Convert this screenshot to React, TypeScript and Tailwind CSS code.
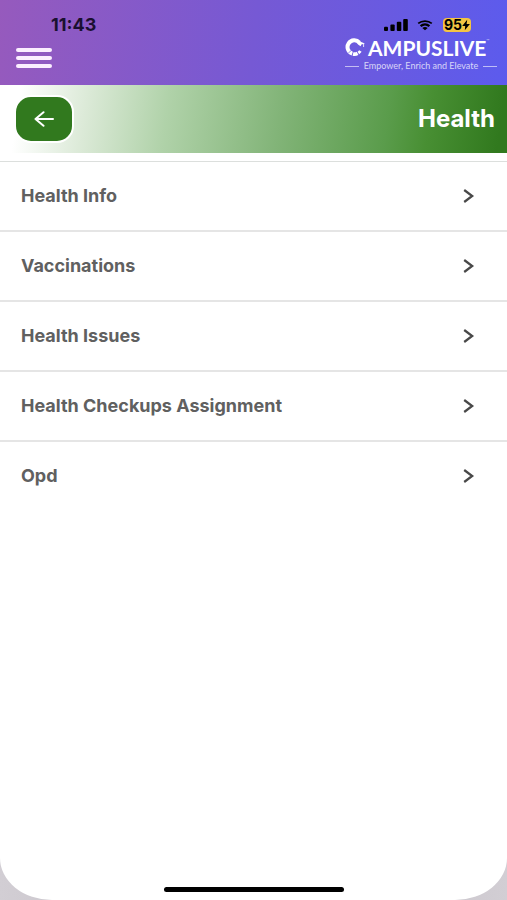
import { useState } from "react";

const items = [
  "Health Info",
  "Vaccinations",
  "Health Issues",
  "Health Checkups Assignment",
  "Opd",
];

function StatusBar() {
  return (
    <div className="flex items-center justify-between pl-[51px] pr-9 pt-[15px] text-black">
      <span className="text-[18px] leading-5 font-bold text-[#1a1030]">11:43</span>
      <div className="flex items-center">
        <svg className="h-3 w-6" viewBox="0 0 24 12" fill="currentColor" aria-label="Signal">
          <rect x="0" y="7.8" width="4" height="4.2" rx="1" />
          <rect x="6.4" y="5.5" width="4.3" height="6.5" rx="1" />
          <rect x="12.8" y="2.8" width="4.5" height="9.2" rx="1" />
          <rect x="19.2" y="0" width="4.6" height="12" rx="1" />
        </svg>
        <svg className="ml-2 h-3 w-[18px]" viewBox="0 0 18 12" aria-label="Wi-Fi">
          <path d="M2.2 4.4C6 1.3 12 1.3 15.8 4.4" fill="none" stroke="currentColor" strokeWidth="1.8" />
          <path d="M4.6 7.1C7.2 4.9 10.8 4.9 13.4 7.1" fill="none" stroke="currentColor" strokeWidth="2.3" />
          <path d="M6.3 9C8 7.8 10 7.8 11.7 9L9 11.3z" fill="currentColor" />
        </svg>
        <div className="ml-[9px] flex h-[14px] w-7 items-center justify-center rounded bg-[#f4c443]">
          <span className="text-[14px] leading-[14px] font-bold">95</span>
          <svg className="h-3 w-2" viewBox="0 0 8 12" fill="currentColor" aria-label="Charging">
            <path d="M5.2 .8L.2 6.9H3.2L2.8 11.2L7.9 5H4.6z" />
          </svg>
        </div>
      </div>
    </div>
  );
}

function Logo() {
  return (
    <div className="w-[158px] text-white">
      <div className="flex h-[19px] items-center">
        <svg className="mr-[2px] h-[19px] w-[21px] shrink-0" viewBox="0 0 21 19" aria-hidden="true">
          <path d="M14.4 4.6A6.8 6.8 0 1 0 7.2 15.6" fill="none" stroke="white" strokeWidth="4" />
          <path d="M8 15.9A6.8 6.8 0 0 0 12.6 15.4" fill="none" stroke="white" strokeWidth="3.6" />
          <path d="M13.4 14.9A6.8 6.8 0 0 0 15.4 13" fill="none" stroke="white" strokeWidth="3" />
          <path d="M11 2L20 5.6L16.4 6.6L15.6 8.2L13 6.4z" fill="white" />
          <path d="M18.6 6V9" stroke="white" strokeWidth=".8" />
          <path d="M3.2 15.2L6.6 12.2" stroke="#6259e5" strokeWidth=".7" />
        </svg>
        <span className="font-['Lato'] text-[21px] leading-[19px] font-bold">AMPUSLIVE</span>
        <span className="self-start text-[5px] leading-[6px] text-white/70">™</span>
      </div>
      <div className="mt-1 flex items-center gap-[5px] pr-[6px] text-white/75">
        <span className="h-px flex-1 bg-white/60" />
        <span className="font-['Lato'] text-[9px] leading-[10px]">Empower, Enrich and Elevate</span>
        <span className="h-px flex-1 bg-white/60" />
      </div>
    </div>
  );
}

export default function App() {
  const [menuOpen, setMenuOpen] = useState(false);

  return (
    <div className="min-h-screen bg-linear-to-r from-[#d2ced4] via-[#bdb8bf] to-[#d2ced4] font-['Inter',sans-serif]">
      <div className="flex min-h-screen flex-col overflow-hidden rounded-b-[52px_42px] bg-white">
        <header className="h-[85px] bg-[linear-gradient(96deg,#965abd,#7659d4_50%,#5c5bed)]">
          <StatusBar />
          <div className="flex items-start justify-between pl-4 pr-1">
            <button
              type="button"
              aria-label="Menu"
              aria-expanded={menuOpen}
              onClick={() => setMenuOpen(!menuOpen)}
              className="mt-[13px] flex w-9 flex-col gap-1"
            >
              <span className="h-1 w-full rounded-xs bg-[#fbeeff]" />
              <span className="h-1 w-full rounded-xs bg-[#fbeeff]" />
              <span className="h-1 w-full rounded-xs bg-[#fbeeff]" />
            </button>
            <div className="mt-[3px]">
              <Logo />
            </div>
          </div>
        </header>

        <div className="flex h-[68px] items-center justify-between bg-[linear-gradient(98deg,#fff_4%,#dcead8_17%,#b0d2a9_33%,#82b478_55%,#5a9c4b_76%,#488f33_84%,#31791e_98%)] pl-[14px] pr-3">
          <button
            type="button"
            aria-label="Back"
            className="flex h-12 w-[60px] items-center justify-center rounded-[17px] border-2 border-white bg-[#31791e]"
          >
            <svg className="h-4 w-5" viewBox="0 0 20 16" fill="none" stroke="white" strokeWidth="2" strokeLinecap="round" strokeLinejoin="round">
              <path d="M19 8H1.5M9.5 1.2L1.5 8L9.5 14.8" />
            </svg>
          </button>
          <h1 className="text-[24px] leading-7 font-bold text-white">Health</h1>
        </div>

        <nav className="mt-2 border-t border-[#dcdfdd]">
          <ul className="divide-y-2 divide-[#e5e5e5]">
            {items.map((item) => (
              <li key={item}>
                <a href="#" className="flex h-[68px] items-center justify-between pl-[21px] pr-8 text-[#606060]">
                  <span className="text-[18px] leading-6 font-bold">{item}</span>
                  <svg className="h-[14px] w-3" viewBox="0 0 12 14" fill="none" stroke="#484848" strokeWidth="2.2" aria-hidden="true">
                    <path d="M1.2 1L9.2 7L1.2 13" />
                  </svg>
                </a>
              </li>
            ))}
          </ul>
        </nav>

        <div className="mt-auto flex justify-center pb-2">
          <div className="h-[5px] w-[180px] rounded-full bg-black" />
        </div>
      </div>
    </div>
  );
}
